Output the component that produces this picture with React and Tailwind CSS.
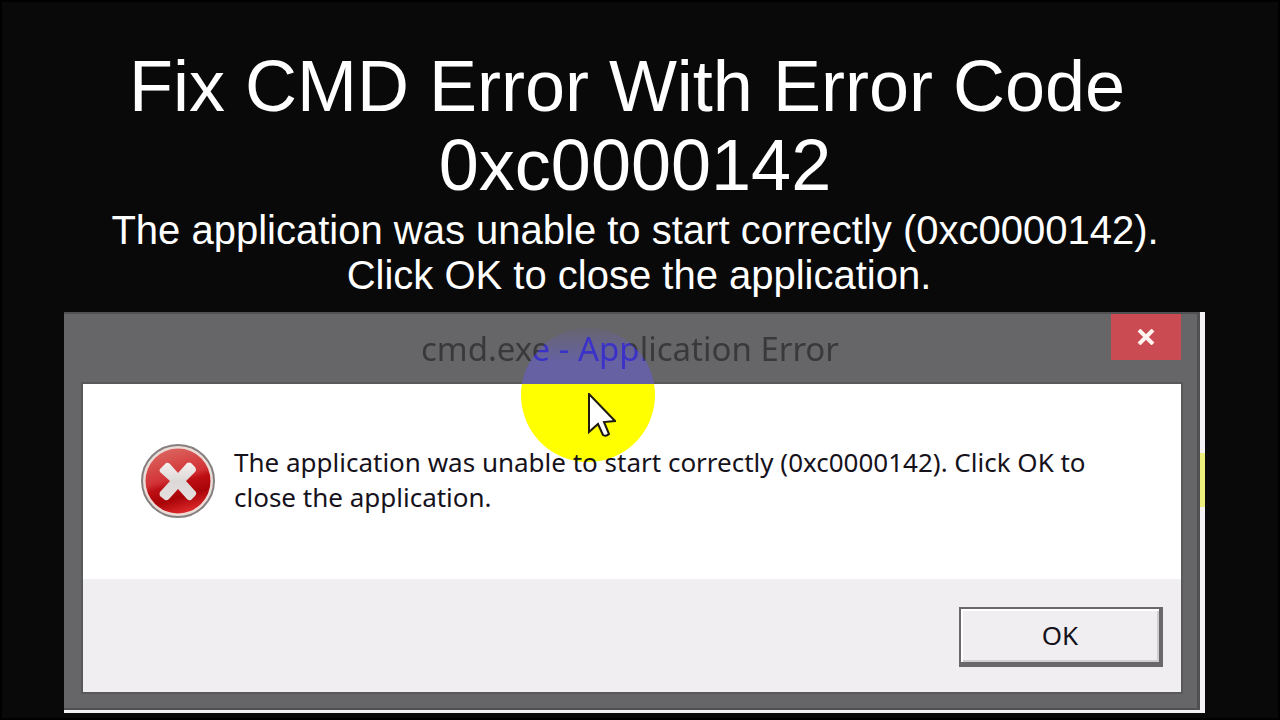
function ErrorIcon() {
  return (
    <svg viewBox="0 0 76 76" className="h-[76px] w-[76px] shrink-0" aria-hidden="true">
      <defs>
        <linearGradient id="ball" x1="0.3" y1="0" x2="0.6" y2="1">
          <stop offset="0" stopColor="#dc6660" />
          <stop offset="0.45" stopColor="#d23236" />
          <stop offset="0.55" stopColor="#bd0f14" />
          <stop offset="0.75" stopColor="#a80408" />
          <stop offset="1" stopColor="#e02a2c" />
        </linearGradient>
        <linearGradient id="cross" x1="0" y1="0" x2="0" y2="1">
          <stop offset="0" stopColor="#f6f0ef" />
          <stop offset="0.5" stopColor="#dcd8d7" />
          <stop offset="1" stopColor="#e6e0df" />
        </linearGradient>
      </defs>
      <circle cx="38" cy="38" r="36" fill="#ecdcd8" stroke="#85807f" strokeWidth="2" />
      <circle cx="38" cy="38" r="32.5" fill="url(#ball)" />
      <path
        d="M20 26 L26 20 Q28 19 30 21 L38 30 L47 20 Q49 19 51 20 L55 24 Q57 27 55 29 L46 38 L56 49 Q57 51 55 53 L51 57 Q49 58 47 56 L38 46 L29 56 Q27 58 25 57 L20 53 Q19 51 20 49 L30 38 L20 29 Q19 27 20 26 Z"
        fill="url(#cross)"
      />
    </svg>
  );
}

function Pointer() {
  return (
    <svg viewBox="0 0 28 45" className="absolute top-[65px] left-[67px] h-[45px] w-7" aria-hidden="true">
      <path
        d="M1 1 V39 L10 31 L15 42 Q18 44 21 41 L16 29 L27 28 Z"
        fill="#fff"
        stroke="#1e1a10"
        strokeWidth="2"
      />
    </svg>
  );
}

export default function App() {
  return (
    <main className="min-h-screen border-2 border-black bg-[#090909] pb-1 font-['Liberation_Sans',Arial,sans-serif] text-white">
      <header className="flex flex-col items-center pt-[45px] pr-[10px] text-center">
        <h1 className="text-[72px] leading-[79px]">
          <span className="block pr-4">Fix CMD Error With Error Code</span>
          <span className="block">0xc0000142</span>
        </h1>
        <p className="pt-[3px] text-[40px] leading-[45px]">
          <span className="block">The application was unable to start correctly (0xc0000142).</span>
          <span className="block pl-2">Click OK to close the application.</span>
        </p>
      </header>

      <section
        role="dialog"
        aria-labelledby="dialog-title"
        className="relative mt-[14px] mr-[73px] ml-[62px] border-r-[5px] border-b-[3px] border-[#f4f2f4] font-['Noto_Sans','Open_Sans',sans-serif]"
      >
        <div className="border-t-2 border-r-3 border-b-2 border-[#505052] bg-[#666567] pr-4 pb-4 pl-[19px]">
          <div className="relative flex h-[70px] items-start">
            <div className="absolute top-[14px] left-[438px] h-[134px] w-[134px] rounded-full bg-linear-to-b from-[#67646f] from-0% via-[#6661a2] via-25% to-[#6661a2] to-50%" />
            <h2
              id="dialog-title"
              className="relative flex-1 bg-[radial-gradient(circle_67px_at_505px_81px,#3a31c8_98%,#39383a_100%)] bg-clip-text pt-[10px] pl-[338px] text-[33px] leading-[50px] whitespace-nowrap text-transparent"
            >
              cmd.exe - Application Error
            </h2>
            <button aria-label="Close" className="flex h-[46px] w-[70px] items-center justify-center bg-[#ca4c52]">
              <svg viewBox="0 0 18 16" className="h-4 w-[18px]" aria-hidden="true">
                <path d="M2 1 L16 15 M16 1 L2 15" stroke="#fff4f0" strokeWidth="4" />
              </svg>
            </button>
          </div>

          <div className="outline-2 outline-[#59585a]">
            <div className="relative flex h-[195px] items-start overflow-hidden bg-white pt-[59px] pl-[57px]">
              <div className="absolute -top-[56px] left-[438px] h-[134px] w-[134px] rounded-full bg-[#ffff00]">
                <Pointer />
              </div>
              <ErrorIcon />
              <p className="relative pt-[2px] pl-[18px] text-[26px] leading-[35px] whitespace-nowrap text-[#16121c]">
                The application was unable to start correctly (0xc0000142). Click OK to
                <br />
                close the application.
              </p>
            </div>
            <footer className="flex h-[113px] items-start justify-end bg-[#f0eef1] pt-7 pr-[18px]">
              <button className="h-[60px] w-[204px] border-t-2 border-r-4 border-b-[5px] border-l-2 border-[#69676a] bg-[#f0eef1] text-[26px] text-[#16121c] shadow-[inset_2px_2px_0_#fff,inset_-2px_-2px_0_#d0ced1]">
                OK
              </button>
            </footer>
          </div>
        </div>
        <div className="absolute top-[141px] -right-[5px] h-[54px] w-[5px] bg-[#eef07c]" />
      </section>
    </main>
  );
}
